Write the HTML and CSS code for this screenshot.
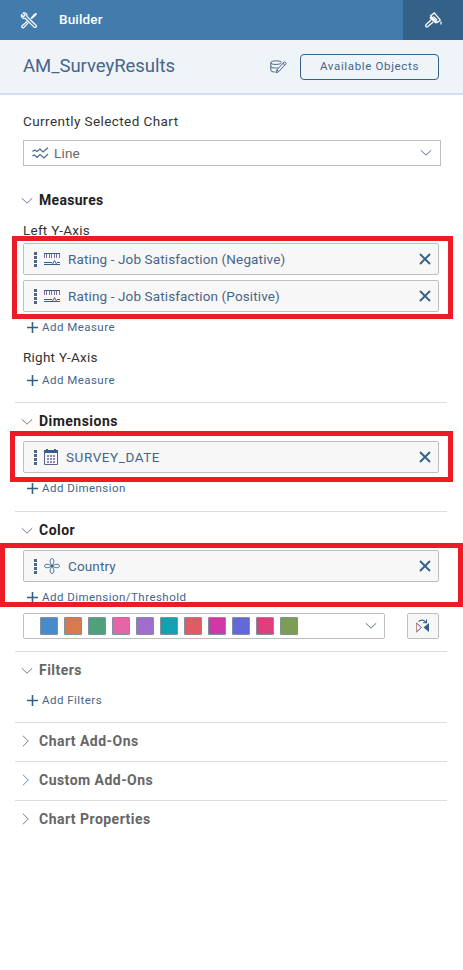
FILE: index.html
```html
<!DOCTYPE html>
<html lang="en">
<head>
<meta charset="utf-8">
<title>Builder</title>
<link rel="stylesheet" href="styles.css">
</head>
<body>
<svg class="defs" width="0" height="0">
  <symbol id="down" viewBox="0 0 12 8"><path d="M.8 1.2 6 6.2l5.200-5" fill="none" stroke="currentColor" stroke-width="1"/></symbol>
  <symbol id="right" viewBox="0 0 8 12"><path d="M1 .8 6.300 6 1 11.200" fill="none" stroke="currentColor" stroke-width="1"/></symbol>
  <symbol id="close" viewBox="0 0 12 12"><path d="m1 1 10 10M11 1 1 11" fill="none" stroke="currentColor" stroke-width="1.900"/></symbol>
  <symbol id="plus" viewBox="0 0 11 11"><path d="M5.500 0v11M0 5.500h11" fill="none" stroke="currentColor" stroke-width="1.600"/></symbol>
  <symbol id="measure" viewBox="0 0 16 13"><path d="M.5 1v4M2.500 1v4M5.500 1v4M7.500 1v4M10.500 1v4M12.500 1v4M15.500 1v4" fill="none" stroke="#806d9f"/><path d="M0 .5h16M0 9.500h8M13 9.500h3M0 11.500h16" fill="none" stroke="currentColor" stroke-width="1.200"/><path d="m10.500 7.500-2.300 4h4.600z" fill="#f7f7f7" stroke="currentColor"/></symbol>
</svg>

<header class="topbar">
  <svg class="tools" viewBox="0 0 17 17" fill="none" stroke="#fff" stroke-width="1.200"><path d="m10.500 6.500 3.200-3.800 1.600-1.200.5.500L14.500 3.700l-3.800 3M6.500 9.500l-4.800 4.200a1.200 1.200 0 0 0 1.800 1.700L7.800 10.700M1 2.800l2 1.800 1.500-1.500L2.700 1c2-.8 4.300.8 3.600 3.400l3.200 3.100 6 5.700c1.200 1.200-.6 3-1.900 1.900L7.700 9.300 4.500 6.200C2.500 7 .4 5 1 2.800z"/></svg>
  <span class="topbar-title">Builder</span>
  <span class="tab">
    <svg width="17" height="16" viewBox="0 0 17 16" fill="none" stroke="#fff" stroke-width="1.300"><path d="m9.300.9 5.900 7-2.500 2.500-7.100-6.500z"/><path d="m5.600 4.500 6.500 6-1.600.8-5.800-5z" fill="#fff" stroke-width=".5"/><path d="M6 8 1 12.700a1.200 1.200 0 0 0 1.900 1.900L8.200 10M8.400 4.500l3.700 3.800"/><path d="M16 9.500v3" stroke="#d9e5ef" stroke-width="1.500"/></svg>
  </span>
</header>

<div class="modelbar">
  <span class="model">AM_SurveyResults</span>
  <svg class="db" width="17" height="14" viewBox="0 0 17 14" fill="none" stroke="#4a6484" stroke-width="1"><path d="M11.500 2.500C11.500.3.800.3.800 2.500v7.800c0 1 1.800 1.700 4 1.700M.8 2.800c0 2 8 2.200 10 .5M.8 6.300c0 1.500 3.800 2 7 1.500"/><path d="m6 12.800.8-2.800 7.500-8.200 1.900 1.600-7.500 8.300zM7 10l1.800 1.700M13 3.300l1.800 1.700"/></svg>
  <button class="objects">Available Objects</button>
</div>

<main class="panel">
  <div class="chart">
    <div class="label selected-label">Currently Selected Chart</div>
    <div class="select">
      <svg width="17" height="12" viewBox="0 0 17 12" fill="none" stroke="#4b6a90" stroke-width="1.200"><path d="m.5 4.500 2-1.500L5 4.500 8 2l3 3L16 .7M.5 9l2-1 2.500 2.500L8 7.500 12 11l4-4"/></svg>
      <span class="select-text">Line</span>
      <svg class="arrow" width="12" height="8"><use href="#down"/></svg>
    </div>
  </div>

  <section class="section first">
    <h2 class="title"><svg width="12" height="8"><use href="#down"/></svg>Measures</h2>
    <div class="label axis">Left Y-Axis</div>
    <div class="chips">
      <div class="chip"><i class="grip"></i><svg class="kind" width="16" height="13"><use href="#measure"/></svg><span>Rating - Job Satisfaction (Negative)</span><svg class="close" width="12" height="12"><use href="#close"/></svg></div>
      <div class="chip"><i class="grip"></i><svg class="kind" width="16" height="13"><use href="#measure"/></svg><span>Rating - Job Satisfaction (Positive)</span><svg class="close" width="12" height="12"><use href="#close"/></svg></div>
      <div class="mark mark-measures"></div>
    </div>
    <div class="add"><svg width="11" height="11"><use href="#plus"/></svg>Add Measure</div>
    <div class="label axis">Right Y-Axis</div>
    <div class="add tight"><svg width="11" height="11"><use href="#plus"/></svg>Add Measure</div>
  </section>

  <section class="section dimensions">
    <h2 class="title"><svg width="12" height="8"><use href="#down"/></svg>Dimensions</h2>
    <div class="chips lone">
      <div class="chip date"><i class="grip"></i><svg class="kind" width="14" height="16" viewBox="0 0 14 16"><path d="M.5 2.500h13v13H.5z" fill="none" stroke="#5a6288"/><path d="M0 1h14v3H0zM2 0h2v2H2zM10 0h2v2h-2z" fill="currentColor"/><path d="M3 7h2M6 7h2M9 7h2M3 10h2M6 10h2M9 10h2M3 13h2M6 13h2M9 13h2" stroke="#65669a" stroke-width="1.500"/></svg><span>SURVEY_DATE</span><svg class="close" width="12" height="12"><use href="#close"/></svg></div>
      <div class="mark mark-dimensions"></div>
    </div>
    <div class="add"><svg width="11" height="11"><use href="#plus"/></svg>Add Dimension</div>
  </section>

  <section class="section">
    <h2 class="title"><svg width="12" height="8"><use href="#down"/></svg>Color</h2>
    <div class="chips lone">
      <div class="chip"><i class="grip"></i><svg class="kind" width="16" height="16" viewBox="0 0 16 16" fill="none" stroke="currentColor" stroke-width=".9"><path d="M8 7.500C5.500 5 5.500.6 8 .6S10.500 5 8 7.500zM8 8.500c-2.500 2.500-2.500 6.900 0 6.900s2.500-4.400 0-6.900zM7.500 8C5 5.700.6 5.700.6 8S5 10.300 7.500 8zM8.500 8c2.500-2.300 6.900-2.300 6.900 0S11 10.300 8.500 8z"/><circle cx="8" cy="8" r="1" fill="currentColor"/></svg><span>Country</span><svg class="close" width="12" height="12"><use href="#close"/></svg></div>
      <div class="mark mark-color"></div>
    </div>
    <div class="add"><svg width="11" height="11"><use href="#plus"/></svg>Add Dimension/Threshold</div>
    <div class="palette-row">
      <div class="palette">
        <i class="c1"></i><i class="c2"></i><i class="c3"></i><i class="c4"></i><i class="c5"></i><i class="c6"></i><i class="c7"></i><i class="c8"></i><i class="c9"></i><i class="c10"></i><i class="c11"></i>
        <svg class="arrow" width="12" height="8"><use href="#down"/></svg>
      </div>
      <button class="flip"><svg width="16" height="14" viewBox="0 0 16 14" fill="none"><path d="M1.500 4v9L6.500 8.500z" stroke="#c08a96"/><path d="M1.500 4 6.500 8.500l-5 4.500" stroke="#637b97"/><path d="M14 4v9L8.500 8.500z" fill="#346187"/><path d="M3.500 2.500C6 .5 9 .5 11 3.500M11.500.5v3.200H8" stroke="#346187" stroke-width="1.100"/></svg></button>
    </div>
  </section>

  <section class="section muted">
    <h2 class="title"><svg width="12" height="8"><use href="#down"/></svg>Filters</h2>
    <div class="add filters"><svg width="11" height="11"><use href="#plus"/></svg>Add Filters</div>
  </section>
  <section class="section muted closed"><h2 class="title"><svg class="brown" width="8" height="12"><use href="#right"/></svg>Chart Add-Ons</h2></section>
  <section class="section muted closed"><h2 class="title"><svg class="blue" width="8" height="12"><use href="#right"/></svg>Custom Add-Ons</h2></section>
  <section class="section muted closed"><h2 class="title"><svg class="brown" width="8" height="12"><use href="#right"/></svg>Chart Properties</h2></section>
</main>
</body>
</html>
```
FILE: styles.css
```css
* { box-sizing: border-box; }
body { margin: 0; background: #fff; color: #333; font-family: Roboto, "Liberation Sans", sans-serif; font-size: 14px; white-space: nowrap; }
.defs { display: block; position: absolute; }
.topbar { display: flex; align-items: center; height: 40px; padding-left: 20px; background: #427cac; color: #fff; }
.tools { width: 18px; height: 17px; }
.topbar-title { margin-left: 21px; padding-bottom: 2px; font-size: 13.500px; font-weight: 500; letter-spacing: .15px; }
.tab { display: flex; align-items: center; justify-content: center; width: 60px; height: 40px; margin-left: auto; background: #346187; }
.modelbar { display: flex; align-items: center; height: 55px; padding: 0 24px 0 23px; background: #eff4f9; border-bottom: 2px solid #d1e0ee; }
.model { padding-bottom: 2px; color: #46658a; font-size: 18.500px; letter-spacing: -.03px; }
.db { margin-left: auto; }
.objects { width: 139px; height: 26px; margin-left: 13px; padding: 0 0 1px; border: 1px solid #346187; border-radius: 4px; background: transparent; color: #46658a; font: 11.500px Roboto, sans-serif; letter-spacing: .65px; }
.panel { padding: 14px 16px 0 15px; }
.chart { padding-left: 8px; }
.label { color: #333; font-size: 13.500px; line-height: 20px; letter-spacing: .25px; }
.selected-label { line-height: 24px; letter-spacing: .42px; }
.select { display: flex; align-items: center; width: 418px; height: 26px; margin-top: 7px; padding: 0 8px; border: 1px solid #bfbfbf; }
.select-text { margin-left: 5px; color: #666; font-size: 13.500px; letter-spacing: .2px; }
.arrow { margin-left: auto; color: #58718f; }
.section { padding: 8px 0 12px; border-top: 1px solid #ddd; }
.first { padding-top: 24px; border-top: 0; }
.dimensions { padding-bottom: 13px; }
.closed { padding-bottom: 10px; }
.title { display: flex; align-items: center; height: 20px; margin: 0; padding-left: 6px; color: #222; font-size: 14px; font-weight: 700; letter-spacing: .47px; line-height: 20px; }
.title svg { margin: 2px 6px 0 0; color: #6b7b96; }
.title .brown, .title .blue { margin: 0 9px 0 1px; }
.title .brown { color: #80758b; }
.title .blue { color: #5a8db8; }
.first .title { letter-spacing: .3px; }
.muted .title { color: #666; }
.axis { margin: 10px 0 0 8px; }
.chips { position: relative; display: grid; gap: 5px; margin: 3px 8px 0; }
.lone { margin-top: 10px; }
.chip { display: flex; align-items: center; height: 32px; padding: 0 7px 0 10px; border: 1px solid #bfbfbf; border-radius: 2px; background: #f7f7f7; color: #46658a; font-size: 13.500px; letter-spacing: .13px; }
.date { letter-spacing: .57px; }
.grip { width: 3px; height: 15px; background: repeating-linear-gradient(#4d6483 0 3px, transparent 3px 4px); }
.kind { margin: 0 8px 0 7px; color: #346187; }
.close { margin-left: auto; color: #346187; }
.mark { position: absolute; border: 5px solid #ed1c24; pointer-events: none; }
.mark-measures { inset: -7px -14px -7px -11px; }
.mark-dimensions { inset: -10px -14px -9px -13px; }
.mark-color { inset: -7px -24px -25px -23px; }
.add { display: flex; align-items: center; height: 20px; margin: 5px 0 0 12px; color: #46658a; font-size: 11.500px; letter-spacing: .46px; }
.add svg { margin-right: 4px; color: #346187; }
.tight { margin-top: 3px; }
.filters { margin-top: 10px; }
.palette-row { display: flex; justify-content: space-between; margin: 6px 8px 0; }
.palette { display: flex; align-items: center; gap: 6px; width: 362px; height: 26px; padding: 0 7px 0 16px; border: 1px solid #bfbfbf; border-radius: 2px; }
.palette i { width: 18px; height: 18px; border: 1px solid #82909e; border-radius: 1px; }
.c1 { background: #478bcb; }
.c2 { background: #d87a4d; }
.c3 { background: #50a17b; }
.c4 { background: #e565a9; }
.c5 { background: #a16dcb; }
.c6 { background: #11a2b2; }
.c7 { background: #e05b66; }
.c8 { background: #ce39a8; }
.c9 { background: #6469da; }
.c10 { background: #dd3f7f; }
.c11 { background: #7d9c54; }
.flip { display: grid; place-items: center; width: 32px; height: 26px; padding: 0; border: 1px solid #bfbfbf; border-radius: 2px; background: #f7f7f7; }
```
